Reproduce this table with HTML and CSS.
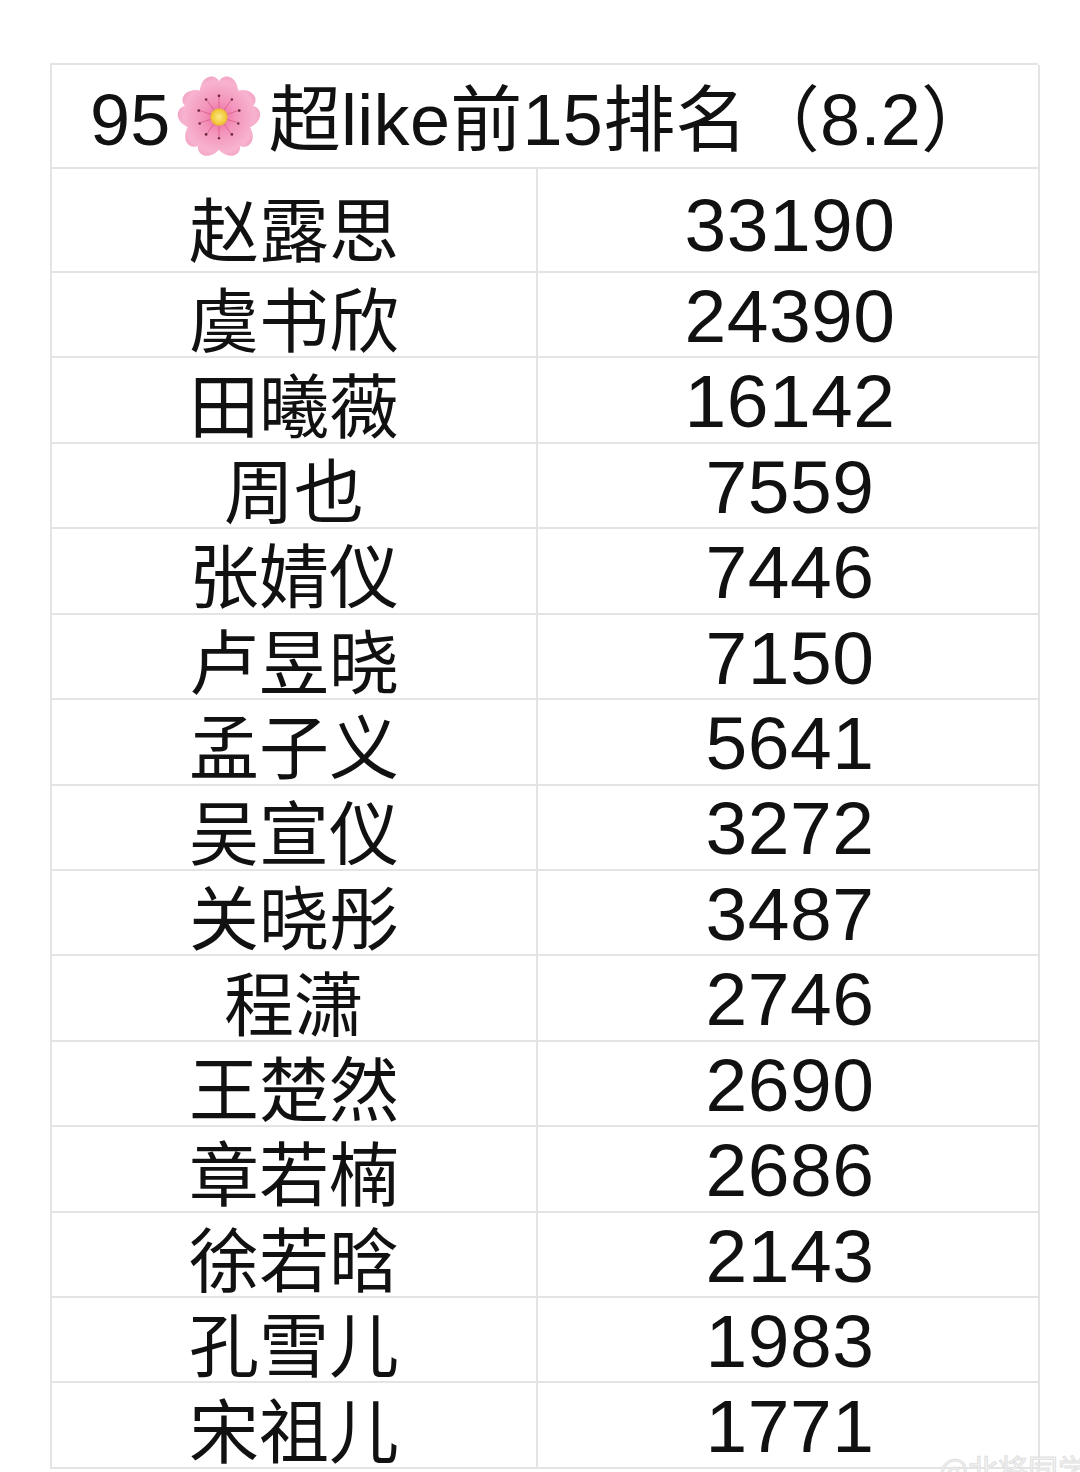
FILE: index.html
```html
<!DOCTYPE html>
<html lang="zh">
<head>
<meta charset="utf-8">
<title>95超like前15排名</title>
<link rel="stylesheet" href="styles.css">
</head>
<body>
<div class="page">
  <div class="sheet">
    <div class="title-cell">
      <span class="title">95<svg class="blossom" viewBox="0 0 100 100" aria-hidden="true">
        <defs>
          <radialGradient id="pg" cx="50" cy="50" r="48" gradientUnits="userSpaceOnUse">
            <stop offset="0" stop-color="#e9669b"/>
            <stop offset="0.35" stop-color="#f393bb"/>
            <stop offset="0.8" stop-color="#f7b3cf"/>
            <stop offset="1" stop-color="#f29fc2"/>
          </radialGradient>
          <radialGradient id="cg" cx="50" cy="50" r="10" gradientUnits="userSpaceOnUse">
            <stop offset="0" stop-color="#fbe98a"/>
            <stop offset="0.7" stop-color="#f3cc3e"/>
            <stop offset="1" stop-color="#e7a93a"/>
          </radialGradient>
          <path id="petal" d="M50 52 C36 44 24 30 31 14 C36 4 46 4 50 11 C54 4 64 4 69 14 C76 30 64 44 50 52 Z"/>
        </defs>
        <g fill="url(#pg)">
          <use href="#petal"/>
          <use href="#petal" transform="rotate(72 50 50)"/>
          <use href="#petal" transform="rotate(144 50 50)"/>
          <use href="#petal" transform="rotate(216 50 50)"/>
          <use href="#petal" transform="rotate(288 50 50)"/>
        </g>
        <g stroke="#d9577f" stroke-width="0.8" fill="none">
          <path d="M50 50 L50 28 M50 50 L71 43 M50 50 L63 68 M50 50 L37 68 M50 50 L29 43"/>
          <path d="M50 50 L63 32 M50 50 L70 56 M50 50 L50 72 M50 50 L30 56 M50 50 L37 32"/>
        </g>
        <g fill="#6b2b3c">
          <circle cx="50" cy="27" r="1.5"/>
          <circle cx="72" cy="43" r="1.5"/>
          <circle cx="64" cy="69" r="1.5"/>
          <circle cx="36" cy="69" r="1.5"/>
          <circle cx="28" cy="43" r="1.5"/>
          <circle cx="64" cy="31" r="1.3"/>
          <circle cx="71" cy="57" r="1.3"/>
          <circle cx="50" cy="73" r="1.3"/>
          <circle cx="29" cy="57" r="1.3"/>
          <circle cx="36" cy="31" r="1.3"/>
        </g>
        <circle cx="50" cy="50" r="9.5" fill="url(#cg)"/>
      </svg>超like前15排名（8.2）</span>
    </div>

    <div class="cell name first">赵露思</div><div class="cell num first">33190</div>
    <div class="cell name">虞书欣</div><div class="cell num">24390</div>
    <div class="cell name">田曦薇</div><div class="cell num">16142</div>
    <div class="cell name">周也</div><div class="cell num">7559</div>
    <div class="cell name">张婧仪</div><div class="cell num">7446</div>
    <div class="cell name">卢昱晓</div><div class="cell num">7150</div>
    <div class="cell name">孟子义</div><div class="cell num">5641</div>
    <div class="cell name">吴宣仪</div><div class="cell num">3272</div>
    <div class="cell name">关晓彤</div><div class="cell num">3487</div>
    <div class="cell name">程潇</div><div class="cell num">2746</div>
    <div class="cell name">王楚然</div><div class="cell num">2690</div>
    <div class="cell name">章若楠</div><div class="cell num">2686</div>
    <div class="cell name">徐若晗</div><div class="cell num">2143</div>
    <div class="cell name">孔雪儿</div><div class="cell num">1983</div>
    <div class="cell name">宋祖儿</div><div class="cell num">1771</div>
  </div>
  <div class="watermark">@北将同学</div>
</div>
</body>
</html>
```

FILE: styles.css
```css
html, body {
  margin: 0;
  padding: 0;
  background: #ffffff;
}

.page {
  position: relative;
  width: 1080px;
  height: 1472px;
  overflow: hidden;
  padding: 63px 0 0 50px;
  box-sizing: border-box;
  font-family: "Liberation Sans", "Noto Sans CJK SC", sans-serif;
  color: #111111;
}

.sheet {
  width: 988px;
  display: grid;
  grid-template-columns: 486px 502px;
  grid-template-rows: 104px 104px repeat(14, 85.43px);
  border-top: 2px solid #e4e4e4;
  border-left: 2px solid #e4e4e4;
  box-sizing: border-box;
}

.title-cell {
  grid-column: 1 / span 2;
  border-right: 2px solid #e4e4e4;
  border-bottom: 2px solid #e4e4e4;
  display: flex;
  align-items: center;
  padding: 8px 0 0 38px;
  box-sizing: border-box;
}

.title {
  font-size: 72px;
  line-height: 1;
  white-space: nowrap;
  display: flex;
  align-items: center;
  letter-spacing: 0.3px;
}

.blossom {
  width: 92px;
  height: 92px;
  margin: -6px 4px 0 2px;
  flex: none;
}

.cell {
  border-right: 2px solid #e4e4e4;
  border-bottom: 2px solid #e4e4e4;
  display: flex;
  align-items: center;
  justify-content: center;
  box-sizing: border-box;
  line-height: 0.9;
  padding-top: 4px;
}

.cell.first {
  padding-top: 12px;
}

.name {
  font-family: "Noto Sans CJK SC", sans-serif;
  font-size: 70px;
  font-weight: 400;
}

.num {
  font-size: 75px;
  padding-left: 4px;
  letter-spacing: 0.5px;
}

.watermark {
  position: absolute;
  right: -8px;
  bottom: -18px;
  font-family: "Noto Sans CJK SC", sans-serif;
  font-size: 30px;
  color: #f6f6f6;
  -webkit-text-stroke: 1px #e0e0e0;
}
```
